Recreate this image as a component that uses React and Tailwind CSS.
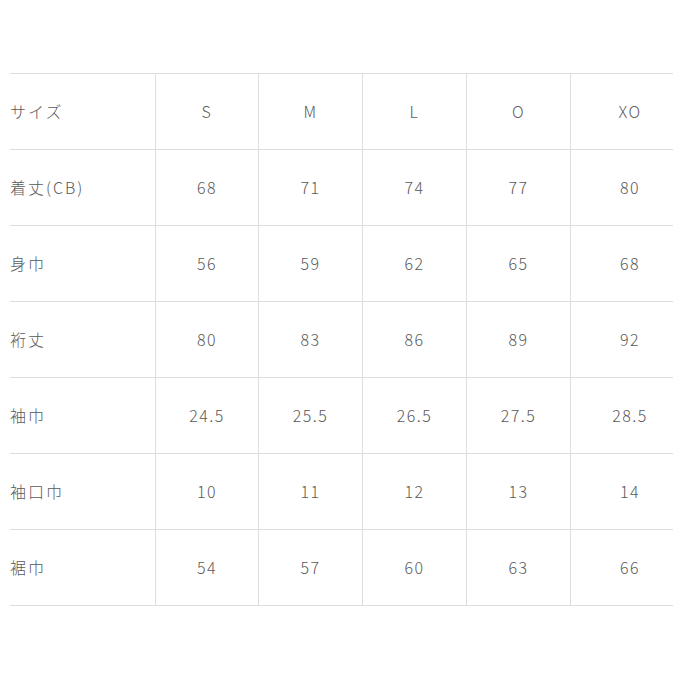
import React from "react";

const sizes = ["S", "M", "L", "O", "XO"];

const rows = [
  { label: "着丈(CB)", values: ["68", "71", "74", "77", "80"] },
  { label: "身巾", values: ["56", "59", "62", "65", "68"] },
  { label: "裄丈", values: ["80", "83", "86", "89", "92"] },
  { label: "袖巾", values: ["24.5", "25.5", "26.5", "27.5", "28.5"] },
  { label: "袖口巾", values: ["10", "11", "12", "13", "14"] },
  { label: "裾巾", values: ["54", "57", "60", "63", "66"] },
];

function Row({ label, values }) {
  return (
    <div className="grid h-[76px] grid-cols-[145px_103px_104px_104px_104px_103px] border-b border-[#dedede]">
      <div className="flex items-center pb-[2px] text-[16px] tracking-[2px]">{label}</div>
      {values.map((v, i) => (
        <div
          key={i}
          className={
            i === 4
              ? "flex items-center justify-center border-l border-[#dedede] pb-[2px] pl-[16px] text-[16px] tracking-[1.5px]"
              : "flex items-center justify-center border-l border-[#dedede] pb-[2px] text-[16px] tracking-[1.5px]"
          }
        >
          {v}
        </div>
      ))}
    </div>
  );
}

export default function App() {
  return (
    <div
      className="min-h-[680px] w-[680px] bg-white pt-[73px] pl-[10px] font-light text-[#5a5a5a]"
      style={{ fontFamily: '"Noto Sans CJK JP", "Noto Sans", sans-serif' }}
    >
      <div className="w-[663px] border-t border-[#dedede]">
        <Row label="サイズ" values={sizes} />
        {rows.map((r) => (
          <Row key={r.label} label={r.label} values={r.values} />
        ))}
      </div>
    </div>
  );
}
